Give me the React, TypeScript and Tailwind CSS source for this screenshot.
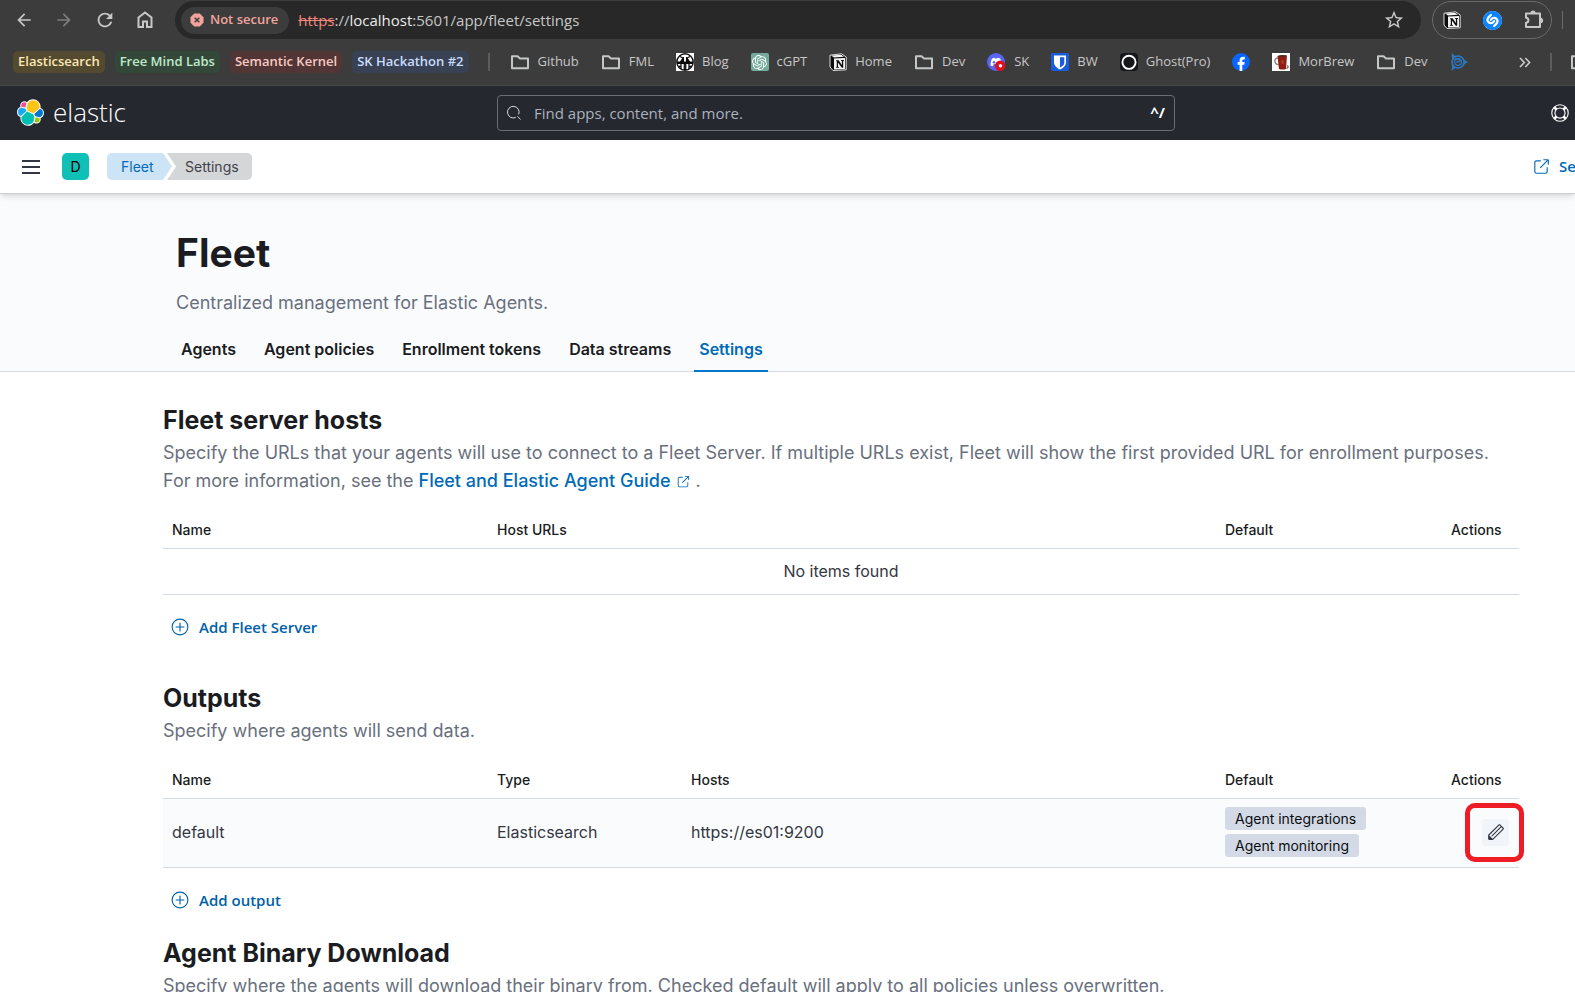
import React from "react";
import { MdArrowBack, MdArrowForward, MdRefresh, MdStarBorder } from "react-icons/md";
import { SiOpenai, SiShazam } from "react-icons/si";

type IconProps = { className?: string };

function FolderIcon() {
  return (
    <svg width="20" height="18" viewBox="0 0 20 18" fill="none" stroke="#c4c7c5" strokeWidth="2">
      <path d="M2 3.2h5.6l2.2 2.2H18v9.8H2z" strokeLinejoin="round" />
    </svg>
  );
}

function HomeIcon() {
  return (
    <svg width="18" height="20" viewBox="0 0 18 20" fill="none" stroke="#c7c7c7" strokeWidth="2">
      <path d="M2.500 7.500 9 2.500l6.500 5v9.500h-4.500v-5.500h-4v5.500H2.500z" />
    </svg>
  );
}

function NotionIcon() {
  return (
    <svg width="18" height="18" viewBox="0 0 18 18">
      <path d="M1 2.200 12.500.8 17.200 4v12.800L4 17.500 1 14z" fill="#0d0d0d" stroke="#dcdcdc" strokeWidth="1" strokeLinejoin="round" />
      <path d="M2.200 2.600 12 1.800l3 2-10 .6z" fill="#f4f4f4" />
      <path d="M5 5.600 16 5v11l-11 .6z" fill="#f4f4f4" />
      <path d="M7 7.200h2.600l3.300 4.800V8l-.9-.3V7h3v.7l-.8.300v6.800h-1.400L9 9.400v4.400l1 .3v.7H7v-.7l.8-.3V8.200L7 7.900z" fill="#0d0d0d" />
    </svg>
  );
}

function BlogIcon() {
  return (
    <svg width="18" height="18" viewBox="0 0 18 18">
      <rect width="18" height="18" fill="#fff" />
      <circle cx="9" cy="9" r="8.200" fill="#fff" stroke="#111" strokeWidth="1.400" />
      <path d="M1 8.500h3L7 4h1v4.500h2V4h1l3 4.500h3V11H1z" fill="#0a0a0a" />
      <path d="M5 11v5M8.300 11v6M9.700 11v6M13 11v5M4 3.500 7 5M14 3.500 11 5M2 13.500h3M13 13.500h3" stroke="#111" strokeWidth="1.300" fill="none" />
    </svg>
  );
}

function DiscordIcon() {
  return (
    <svg width="19" height="18" viewBox="0 0 19 18">
      <circle cx="9" cy="9" r="9" fill="#5865f2" />
      <path d="M3.500 12.500c0-3 .7-5.400 1.600-6.900 1-.6 1.800-.8 2.600-.9l.4.800h2l.4-.8c1 .1 1.800.4 2.600.9.900 1.500 1.400 3 1.500 5l-8 .4-.6 2.200c-1 0-1.800-.2-2.500-.7z" fill="#fff" />
      <circle cx="7" cy="9.300" r="1.200" fill="#5865f2" />
      <circle cx="13.200" cy="12.800" r="5.200" fill="#e0101a" />
      <circle cx="13.500" cy="12.800" r="1.700" fill="#fff" />
    </svg>
  );
}

function BitwardenIcon() {
  return (
    <svg width="18" height="18" viewBox="0 0 18 18">
      <rect width="18" height="18" rx="2" fill="#175ddc" />
      <path d="M3 2.500h12v7.200c0 3-2.500 5-6 6.800-3.500-1.800-6-3.800-6-6.800z" fill="#fff" />
      <path d="M9 4.300h4.300v5.400c0 2-1.700 3.400-4.300 4.900z" fill="#175ddc" />
    </svg>
  );
}

function GhostIcon() {
  return (
    <svg width="18" height="18" viewBox="0 0 18 18">
      <rect width="18" height="18" rx="4" fill="#15171a" />
      <circle cx="9" cy="9.300" r="6.600" fill="#15171a" stroke="#fff" strokeWidth="1.900" />
    </svg>
  );
}

function FacebookIcon() {
  return (
    <svg width="18" height="18" viewBox="0 0 18 18">
      <circle cx="9" cy="9" r="9" fill="#0866ff" />
      <path d="M7.600 18v-6.200H5.600V9h2V7.600c0-2.600 1.300-3.800 3.700-3.800.5 0 1.100.1 1.500.2v2.400h-1.200c-1 0-1.300.4-1.300 1.200V9h2.400l-.5 2.800h-1.900V18z" fill="#fff" />
    </svg>
  );
}

function MugIcon() {
  return (
    <svg width="18" height="18" viewBox="0 0 18 18">
      <rect width="18" height="18" fill="#fff" />
      <path d="M6 5c-4.500 0-4 6.500.8 6.500" stroke="#8d857f" strokeWidth="1.500" fill="none" />
      <path d="M5.500 3 15 2.500l-1 13.500c-2.500.9-5 .7-7 0z" fill="#8f1d12" />
      <path d="M5.500 3C8 1.800 12.500 1.700 15 2.500c-2 1.600-7 1.700-9.500.5z" fill="#4f2a20" />
      <path d="m9 8 2.500-1 .5 4-2.500-.5z" fill="#a8402c" />
      <path d="M14.500 15.500c2-.5 2-2 .8-3" stroke="#6a5b55" strokeWidth="1.200" fill="none" />
    </svg>
  );
}

function SwirlIcon() {
  return (
    <svg width="18" height="18" viewBox="0 0 18 18" fill="none" stroke="#2d78c4">
      <circle cx="8" cy="9" r="6" strokeWidth="1.600" />
      <circle cx="8" cy="9" r="3.400" strokeWidth="1.200" />
      <path d="M6.500 9.500c.5-1.500 2.500-1.500 3 0M4 7c2-1.500 5-1 7 1.500" strokeWidth="1.200" />
      <path d="m1.500 0 4 3.200-3.300 2.500zM1.500 18l4-3.200-3.300-2.500zM18 9l-4.300-2.500v5z" fill="#2d78c4" stroke="none" />
    </svg>
  );
}

function ChatIcon() {
  return (
    <span className="flex size-[18px] items-center justify-center rounded-xs bg-[#74aa9c] text-white">
      <SiOpenai size={15} />
    </span>
  );
}

function PuzzleIcon() {
  return (
    <svg width="22" height="22" viewBox="0 0 22 22" fill="none" stroke="#c7c7c7" strokeWidth="2" strokeLinejoin="round">
      <path d="M3 4.500h14v13.500H3v-4.300c3.200-.3 3.200-4.700 0-5z" />
      <path d="M7.400 4a2.600 2.600 0 0 1 5.200 0zM17.500 8.800a2.600 2.600 0 0 1 0 5.200z" fill="#c7c7c7" stroke="none" />
    </svg>
  );
}

function ElasticLogo() {
  const petals = [
    ["#FEC514", "M12.580 13.787l7.002 3.211 7.066-6.213a7.849 7.849 0 00.152-1.557c0-4.287-3.464-7.774-7.720-7.774a7.698 7.698 0 00-6.373 3.384l-1.176 6.119 1.049 2.830z"],
    ["#00BFB3", "M5.333 21.228a7.964 7.964 0 00-.153 1.581c0 4.300 3.473 7.797 7.743 7.797a7.718 7.718 0 006.422-3.452l1.167-6.103-1.556-2.988-7.030-3.215-6.593 6.380z"],
    ["#F04E98", "M5.288 9.067l4.800 1.137L11.140 4.730a3.785 3.785 0 00-2.291-.775 3.823 3.823 0 00-3.802 3.831c0 .444.080.887.240 1.280z"],
    ["#1BA9F5", "M4.871 10.214c-2.146.715-3.640 2.770-3.640 5.050a5.310 5.310 0 003.384 4.953l6.735-6.124-1.236-2.656-5.243-1.223z"],
    ["#93C90E", "M20.868 27.155a3.755 3.755 0 002.282.784 3.823 3.823 0 003.802-3.831c0-.444-.080-.887-.240-1.280l-4.796-1.129-1.048 5.456z"],
    ["#0077CC", "M21.836 20.448l5.280 1.242c2.147-.715 3.640-2.770 3.640-5.050a5.320 5.320 0 00-3.392-4.953l-6.906 6.086 1.378 2.675z"],
  ];
  return (
    <svg width="27" height="27" viewBox="0 0 32 32">
      {petals.map(([fill, d]) => (
        <path key={fill} d={d} fill="#fff" stroke="#fff" strokeWidth="2.400" strokeLinejoin="round" />
      ))}
      {petals.map(([fill, d]) => (
        <path key={fill} d={d} fill={fill} />
      ))}
    </svg>
  );
}

function PopoutIcon({ className }: IconProps) {
  return (
    <svg className={className} viewBox="0 0 16 16" fill="currentColor">
      <path d="M13 8.500a.5.5 0 111 0V12a2 2 0 01-2 2H4a2 2 0 01-2-2V4a2 2 0 012-2h3.500a.5.5 0 010 1H4a1 1 0 00-1 1v8a1 1 0 001 1h8a1 1 0 001-1V8.500zm-5.120.339a.5.5 0 11-.706-.707L13.305 2H10.500a.5.5 0 110-1H14a1 1 0 011 1v3.500a.5.5 0 11-1 0V2.720L7.880 8.838z" />
    </svg>
  );
}

function PlusCircleIcon() {
  return (
    <svg className="size-[18px]" viewBox="0 0 16 16" fill="none" stroke="currentColor">
      <circle cx="8" cy="8" r="7" />
      <path d="M8 4.500v7M4.500 8h7" strokeLinecap="round" />
    </svg>
  );
}

function PencilIcon() {
  return (
    <svg className="size-[18px]" viewBox="0 0 16 16" fill="currentColor">
      <path d="M12.148 3.148L11 2l-9 9v3h3l9-9-1.144-1.144-8.002 7.998a.502.502 0 01-.708 0 .502.502 0 010-.708l8.002-7.998zM11 1c.256 0 .512.098.707.293l3 3a.999.999 0 010 1.414l-9 9A.997.997 0 015 15H2a1 1 0 01-1-1v-3c0-.265.105-.520.293-.707l9-9A.997.997 0 0111 1zM5 14H2v-3l3 3z" />
    </svg>
  );
}

function HelpIcon() {
  return (
    <svg className="size-[18px]" viewBox="0 0 16 16" fill="none" stroke="#fff">
      <circle cx="8" cy="8" r="7.300" />
      <circle cx="8" cy="8" r="4.500" />
      <path d="m3 3 1.900 1.900M13 3l-1.900 1.900M3 13l1.900-1.900M13 13l-1.900-1.900" strokeWidth="2.400" />
    </svg>
  );
}

const groups = [
  { label: "Elasticsearch", tone: "bg-[#544a30] text-[#fbe8b4]" },
  { label: "Free Mind Labs", tone: "bg-[#34483a] text-[#bfe8ca]" },
  { label: "Semantic Kernel", tone: "bg-[#523635] text-[#f8c9c5]" },
  { label: "SK Hackathon #2", tone: "bg-[#394254] text-[#c9dcfb]" },
];

const bookmarks: { label: string; name?: string; icon: React.ReactNode }[] = [
  { label: "Github", icon: <FolderIcon /> },
  { label: "FML", icon: <FolderIcon /> },
  { label: "Blog", icon: <BlogIcon /> },
  { label: "cGPT", icon: <ChatIcon /> },
  { label: "Home", icon: <NotionIcon /> },
  { label: "Dev", icon: <FolderIcon /> },
  { label: "SK", icon: <DiscordIcon /> },
  { label: "BW", icon: <BitwardenIcon /> },
  { label: "Ghost(Pro)", icon: <GhostIcon /> },
  { label: "", name: "Facebook", icon: <FacebookIcon /> },
  { label: "MorBrew", icon: <MugIcon /> },
  { label: "Dev", icon: <FolderIcon /> },
  { label: "", name: "Trimble", icon: <SwirlIcon /> },
];

function BrowserChrome() {
  return (
    <header className="border-b border-[#4a4a4a] bg-[#3c3c3c] font-['Open_Sans',sans-serif] text-[#c7c7c7]">
      <div className="flex h-10 items-center">
        <nav className="flex w-[175px] shrink-0 items-center gap-5 pl-[14px]">
          <button aria-label="Back" className="w-5"><MdArrowBack size={20} /></button>
          <button aria-label="Forward" className="w-5 text-[#7d7d7d]"><MdArrowForward size={20} /></button>
          <button aria-label="Reload" className="w-[22px]"><MdRefresh size={22} /></button>
          <button aria-label="Home"><HomeIcon /></button>
        </nav>
        <div className="flex h-[38px] grow items-center rounded-full bg-[#282828] pr-4 pl-[6px]">
          <span className="flex h-[27px] items-center gap-[6px] rounded-full bg-[#3c3c3c] pr-[11px] pl-[9px] text-[13px] font-semibold text-[#f2a49c]">
            <svg width="14" height="14" viewBox="0 0 14 14">
              <path d="M4.200.5h5.600l3.700 3.700v5.600l-3.700 3.700H4.200L.5 9.800V4.200z" fill="#f2a49c" />
              <path d="m4.700 4.700 4.600 4.600M9.300 4.700 4.700 9.300" stroke="#3c3c3c" strokeWidth="1.500" />
            </svg>
            Not secure
          </span>
          <span className="ml-[9px] text-[15px] text-[#c7c7c7]">
            <span className="text-[#f2877d] line-through">https</span>://
            <span className="text-[#ebebeb]">localhost</span>:5601/app/fleet/settings
          </span>
          <button aria-label="Bookmark this page" className="ml-auto"><MdStarBorder size={22} /></button>
        </div>
        <div className="ml-[11px] flex h-[38px] w-[120px] shrink-0 items-center justify-between rounded-full border border-[#6a6a6a] pr-[6px] pl-[10px]">
          <NotionIcon />
          <span className="flex size-[19px] items-center justify-center rounded-full bg-white text-[#0a84ff]"><SiShazam size={19} /></span>
          <PuzzleIcon />
        </div>
        <span className="mr-3 ml-[10px] h-[18px] w-px shrink-0 bg-[#6a6a6a]" />
      </div>
      <div className="flex h-[45px] items-center overflow-hidden pb-px pl-[13px] text-[13px] whitespace-nowrap">
        <div className="flex gap-[10px]">
          {groups.map((g) => (
            <button key={g.label} className={`h-[22px] rounded-[5px] px-[5px] pb-[2px] text-[13px] leading-[18px] font-semibold ${g.tone}`}>
              {g.label}
            </button>
          ))}
        </div>
        <span className="ml-[19px] h-[18px] w-[2px] shrink-0 bg-[#5c5c5c]" />
        <nav className="ml-5 flex gap-[22px]">
          {bookmarks.map((b, i) => (
            <a key={i} href="#bookmark" aria-label={b.name} className="flex items-center gap-2">
              {b.icon}
              {b.label}
            </a>
          ))}
        </nav>
        <button aria-label="More bookmarks" className="mr-[19px] ml-auto shrink-0">
          <svg width="12" height="11" viewBox="0 0 12 11" fill="none" stroke="#c7c7c7" strokeWidth="1.700">
            <path d="m1 1 4.300 4.500L1 10M6.300 1l4.300 4.500L6.300 10" />
          </svg>
        </button>
        <span className="h-[18px] w-[2px] shrink-0 bg-[#5c5c5c]" />
        <span className="ml-[18px] w-[5px] shrink-0 overflow-hidden"><FolderIcon /></span>
      </div>
    </header>
  );
}

function KibanaHeader() {
  return (
    <header className="flex h-[54px] items-center bg-[#25282f] pr-[6px] pb-px pl-[17px] font-['Open_Sans',sans-serif]">
      <a href="#home" className="flex w-[480px] items-center gap-[9px] text-white">
        <ElasticLogo />
        <span className="text-[26px] leading-[27px] font-light">elastic</span>
      </a>
      <label className="flex h-9 w-[678px] items-center rounded-[4px] border border-[#6b6d73] pr-[9px] pl-2">
        <svg className="size-[15px]" viewBox="0 0 16 16" fill="none" stroke="#dfe5ef">
          <path d="M10.500 13.200a6.200 6.200 0 1 1 3-3.200M12.200 12l3.300 3.500" />
        </svg>
        <input
          aria-label="Find apps, content, and more."
          placeholder="Find apps, content, and more."
          className="ml-[13px] grow bg-transparent pt-px text-[15px] text-white outline-none placeholder:text-[#abb1bd]"
        />
        <span className="text-[15px] font-bold text-white">^/</span>
      </label>
      <button aria-label="Help" className="ml-auto"><HelpIcon /></button>
    </header>
  );
}

function BreadcrumbBar() {
  return (
    <div className="relative z-10 flex h-[54px] items-center border-b border-[#ccd0d6] bg-white pl-[22px] shadow-md">
      <button aria-label="Toggle navigation" className="flex w-[18px] flex-col gap-1">
        <span className="h-[2px] bg-[#343741]" />
        <span className="h-[2px] bg-[#343741]" />
        <span className="h-[2px] bg-[#343741]" />
      </button>
      <button aria-label="Default space" className="ml-[22px] size-[27px] rounded-[5px] bg-[#10bfb5] text-[14px] text-black">D</button>
      <nav className="ml-[18px] flex text-[14px] leading-[27px]">
        <a href="#fleet" className="w-[65px] rounded-l-[5px] bg-[#cce4f5] pl-[14px] text-[#006bb8] [clip-path:polygon(0_0,56px_0,100%_50%,56px_100%,0_100%)]">
          Fleet
        </a>
        <span className="-ml-[5px] w-[85px] rounded-r-[5px] bg-[#d5d6d8] pl-[18px] text-[#404249] [clip-path:polygon(0_0,100%_0,100%_100%,0_100%,9px_50%)]">
          Settings
        </span>
      </nav>
      <a href="#feedback" className="ml-auto flex w-[43px] shrink-0 items-center gap-[9px] overflow-hidden font-['Open_Sans',sans-serif] text-[15px] font-semibold whitespace-nowrap text-[#006bb8]">
        <PopoutIcon className="size-[18px] shrink-0" />
        Send feedback
      </a>
    </div>
  );
}

const tabs = ["Agents", "Agent policies", "Enrollment tokens", "Data streams", "Settings"];

function PageHeader() {
  return (
    <section className="border-b border-[#d3dae6] bg-[#fafbfd] pl-[176px]">
      <h1 className="pt-[37px] text-[39px] leading-[44px] font-bold text-[#1a1c21]">Fleet</h1>
      <p className="mt-[14px] text-[18px] leading-[28px] text-[#69707d]">Centralized management for Elastic Agents.</p>
      <div role="tablist" className="mt-[9px] -mb-px flex gap-[18px]">
        {tabs.map((t) => (
          <button
            key={t}
            role="tab"
            aria-selected={t === "Settings"}
            className={
              t === "Settings"
                ? "h-[46px] border-b-2 border-[#0077cc] px-[5px] pt-[2px] text-[16px] font-semibold text-[#006bb8]"
                : "h-[46px] border-b-2 border-transparent px-[5px] pt-[2px] text-[16px] font-semibold text-[#1a1c21]"
            }
          >
            {t}
          </button>
        ))}
      </div>
    </section>
  );
}

function Th({ className = "", children }: { className?: string; children: React.ReactNode }) {
  return (
    <th scope="col" className={`h-9 border-b border-[#d3dae6] px-[9px] pb-[2px] text-left text-[14px] font-medium text-[#1a1c21] ${className}`}>
      {children}
    </th>
  );
}

function Td({ className = "px-[9px]", children }: { className?: string; children: React.ReactNode }) {
  return <td className={`h-[69px] border-b border-[#d3dae6] pb-[2px] ${className}`}>{children}</td>;
}

function SectionTitle({ title, children }: { title: string; children: React.ReactNode }) {
  return (
    <>
      <h2 className="text-[25px] leading-[37px] font-bold text-[#1a1c21]">{title}</h2>
      <p className="text-[18px] leading-[28px] text-[#69707d]">{children}</p>
    </>
  );
}

function AddButton({ children }: { children: React.ReactNode }) {
  return (
    <button className="mt-[14px] ml-2 flex h-9 items-center gap-[10px] font-['Open_Sans',sans-serif] text-[15px] font-semibold text-[#0061a6]">
      <PlusCircleIcon />
      {children}
    </button>
  );
}

export default function App() {
  return (
    <div className="h-screen overflow-hidden bg-white font-[Inter,sans-serif] text-[#343741]">
      <BrowserChrome />
      <KibanaHeader />
      <BreadcrumbBar />
      <PageHeader />
      <main className="pt-[30px] pr-[56px] pl-[163px]">
        <section>
          <SectionTitle title="Fleet server hosts">
            Specify the URLs that your agents will use to connect to a Fleet Server. If multiple URLs exist, Fleet will show the first
            provided URL for enrollment purposes. For more information, see the{" "}
            <a href="#guide" className="font-medium text-[#006bb8]">
              Fleet and Elastic Agent Guide <PopoutIcon className="ml-px inline size-[14px]" />
            </a>{" "}
            .
          </SectionTitle>
          <table className="mt-[18px] w-full table-fixed border-separate border-spacing-0">
            <thead>
              <tr>
                <Th className="w-[325px]">Name</Th>
                <Th>Host URLs</Th>
                <Th className="w-[226px]">Default</Th>
                <Th className="w-[77px]">Actions</Th>
              </tr>
            </thead>
            <tbody>
              <tr>
                <td colSpan={4} className="h-[46px] border-b border-[#d3dae6] pb-[2px] text-center text-[16px]">No items found</td>
              </tr>
            </tbody>
          </table>
          <AddButton>Add Fleet Server</AddButton>
        </section>

        <section className="mt-[35px]">
          <SectionTitle title="Outputs">Specify where agents will send data.</SectionTitle>
          <table className="mt-[18px] w-full table-fixed border-separate border-spacing-0">
            <thead>
              <tr>
                <Th className="w-[325px]">Name</Th>
                <Th className="w-[194px]">Type</Th>
                <Th>Hosts</Th>
                <Th className="w-[226px]">Default</Th>
                <Th className="w-[77px]">Actions</Th>
              </tr>
            </thead>
            <tbody>
              <tr className="bg-[#fafbfd] text-[16px]">
                <Td>default</Td>
                <Td>Elasticsearch</Td>
                <Td>https://es01:9200</Td>
                <Td>
                  <div className="flex flex-col items-start gap-1 text-[14px] leading-[23px] text-[#0c0d10]">
                    <span className="rounded-[3px] bg-[#d3dae6] px-[10px]">Agent integrations</span>
                    <span className="rounded-[3px] bg-[#d3dae6] px-[10px]">Agent monitoring</span>
                  </div>
                </Td>
                <Td className="px-[10px]">
                  <div className="relative ml-auto size-[27px]">
                    <button aria-label="Edit" className="flex size-[27px] items-center justify-center rounded-[4px] bg-[#f1f4f8] text-[#343741]">
                      <PencilIcon />
                    </button>
                    <span className="pointer-events-none absolute -top-4 -right-[15px] -bottom-4 -left-[17px] rounded-[10px] border-[5px] border-[#ee1c25]" />
                  </div>
                </Td>
              </tr>
            </tbody>
          </table>
          <AddButton>Add output</AddButton>
        </section>

        <section className="mt-[17px]">
          <SectionTitle title="Agent Binary Download">
            Specify where the agents will download their binary from. Checked default will apply to all policies unless overwritten.
          </SectionTitle>
        </section>
      </main>
    </div>
  );
}
